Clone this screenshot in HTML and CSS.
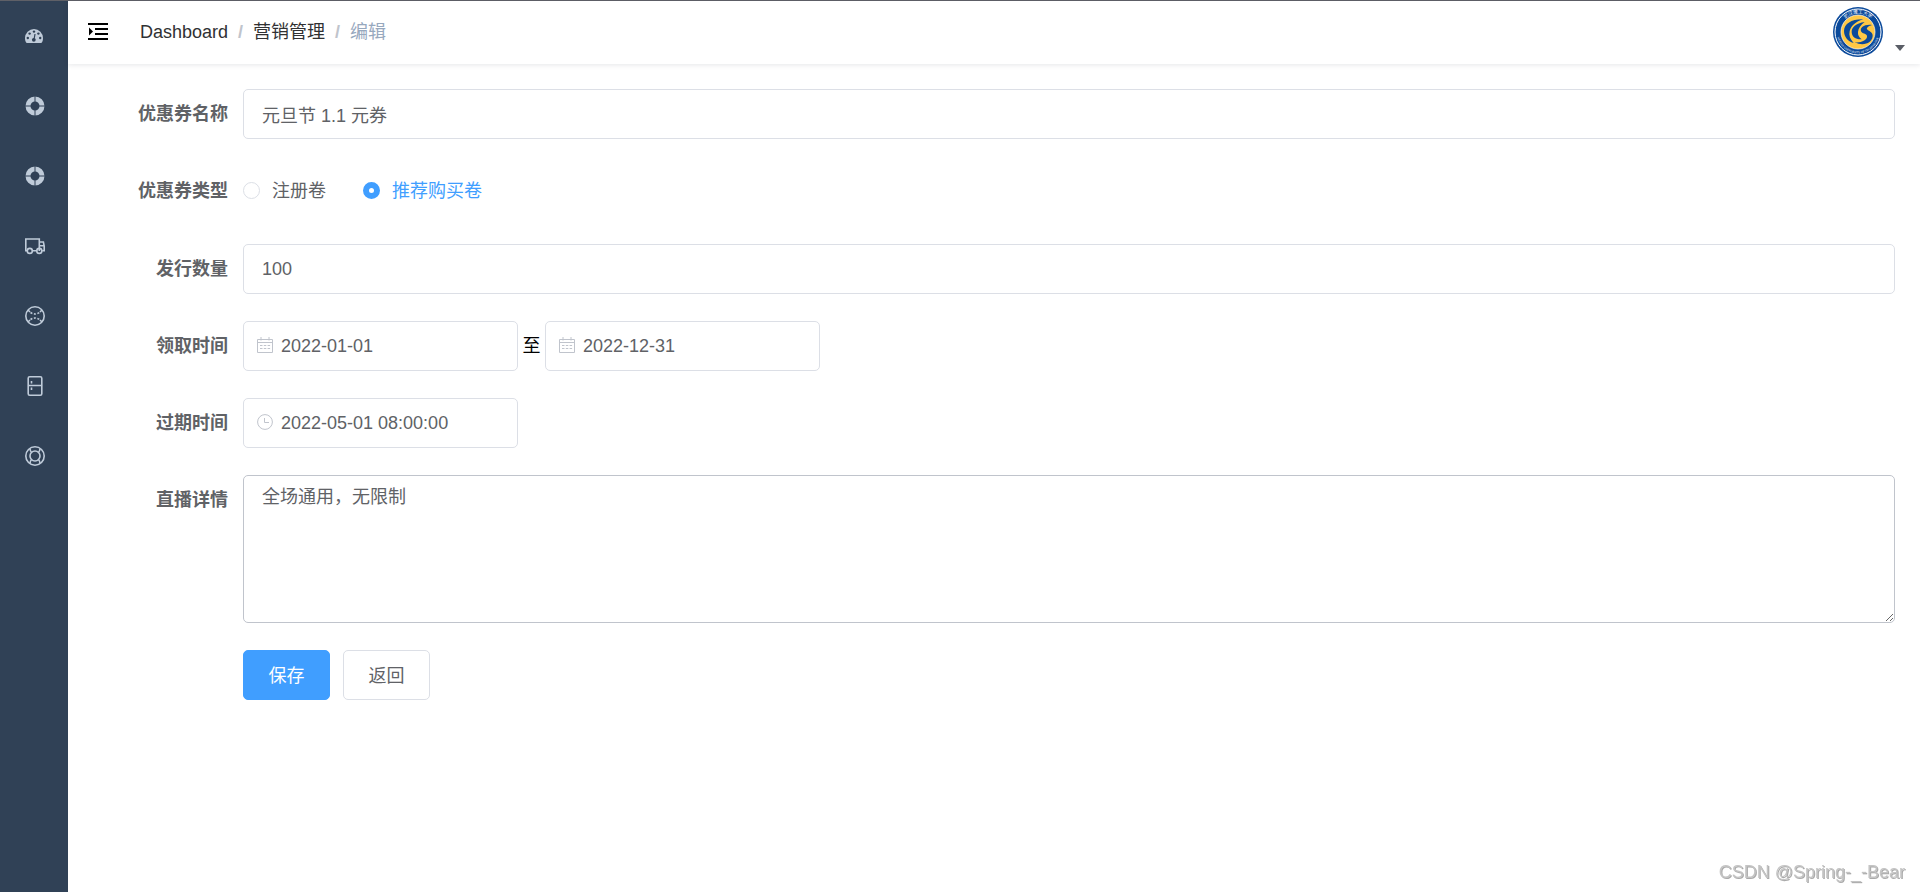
FILE: index.html
```
<!DOCTYPE html>
<html lang="zh-CN">
<head>
<meta charset="utf-8">
<title>营销管理 - 编辑</title>
<link rel="stylesheet" href="styles.css">
</head>
<body>

<div class="app">
  <nav class="sidebar" aria-label="主菜单">
    <a class="menu-item" href="#" title="Dashboard">
      <svg class="menu-icon dash" viewBox="0 0 18 14">
        <path fill="currentColor" d="M9 0a9 9 0 0 0-9 9c0 1.800.4 3.200 1.100 4.500.2.300.4.500.8.500h14.200c.4 0 .6-.2.8-.5C17.600 12.200 18 10.800 18 9a9 9 0 0 0-9-9z"/>
        <g fill="#304156"><circle cx="2.800" cy="9" r="1.200"/><circle cx="4.600" cy="4.600" r="1.200"/><circle cx="9" cy="2.600" r="1.200"/><circle cx="13.400" cy="4.600" r="1.200"/><circle cx="15.200" cy="9" r="1.200"/><circle cx="8.800" cy="10.800" r="1.900"/></g>
        <path stroke="#304156" stroke-width="1.200" d="M9 10.500l1-5.500"/>
      </svg>
    </a>
    <a class="menu-item" href="#" title="营销管理">
      <svg class="menu-icon" viewBox="0 0 20 20">
        <circle cx="10" cy="10" r="7" fill="none" stroke="currentColor" stroke-width="5"/>
        <path stroke="#304156" d="M10 0v20M0 10h20"/>
      </svg>
    </a>
    <a class="menu-item" href="#" title="商品管理">
      <svg class="menu-icon" viewBox="0 0 20 20">
        <circle cx="10" cy="10" r="7" fill="none" stroke="currentColor" stroke-width="5"/>
        <path stroke="#304156" d="M10 0v20M0 10h20"/>
      </svg>
    </a>
    <a class="menu-item" href="#" title="物流管理">
      <svg class="menu-icon line" viewBox="0 0 20 20">
        <path d="M2.500 14.700H.8V3h13.500v12M7 14.700h5M14.200 6h4.200l.8 4v4.700h-2M14.200 9.700h5"/>
        <circle cx="4.800" cy="14.900" r="2.500"/><circle cx="14.300" cy="14.900" r="2.500"/>
      </svg>
    </a>
    <a class="menu-item" href="#" title="活动管理">
      <svg class="menu-icon line" viewBox="0 0 20 20">
        <circle cx="10" cy="10" r="9.200"/>
        <path d="M3 4l2 2M17 4l-2 2M3 16l2-2M17 16l-2-2"/>
        <path stroke-dasharray="2 1.600" d="M5.500 6.500c2.800 2 6.200 2 9 0M5.500 13.500c2.800-2 6.200-2 9 0"/>
      </svg>
    </a>
    <a class="menu-item" href="#" title="库存管理">
      <svg class="menu-icon line" viewBox="0 0 20 20">
        <rect x="3.200" y=".8" width="13.600" height="18.400" rx="1.500"/>
        <path d="M3.200 9.500h13.600M6.500 5v2.500M6.500 11.500v2.500"/>
      </svg>
    </a>
    <a class="menu-item" href="#" title="帮助">
      <svg class="menu-icon line" viewBox="0 0 20 20">
        <circle cx="10" cy="10" r="9.200"/><circle cx="10" cy="10" r="5"/>
        <path d="M5 2.800C5.200 4.600 5.500 5.500 6.600 6.500M15 2.800c-.2 1.800-.5 2.700-1.600 3.700M5 17.200c.2-1.800.5-2.700 1.600-3.700M15 17.200c-.2-1.800-.5-2.700-1.600-3.700"/>
      </svg>
    </a>
  </nav>

  <div class="main">
    <header class="navbar">
      <button class="hamburger" type="button" aria-label="展开菜单">
        <svg viewBox="0 0 20 18"><path d="M0 0h20v2H0zM7 5h13v2H7zM7 10h13v2H7zM0 15h20v2H0zM1 4.500l4 4-4 4z"/></svg>
      </button>
      <div class="breadcrumb">
        <a href="#">Dashboard</a><i>/</i><a href="#">营销管理</a><i>/</i><span>编辑</span>
      </div>
      <button class="user" type="button" aria-label="用户菜单">
        <svg class="avatar" viewBox="0 0 150 150">
          <defs>
            <path id="arc-top" d="M20 75a55 55 0 0 1 110 0"/>
            <path id="arc-bottom" d="M11 75a64 64 0 0 0 128 0"/>
          </defs>
          <circle cx="75" cy="75" r="75" fill="#0b4a9b"/>
          <circle cx="75" cy="75" r="69" fill="none" stroke="#fff" stroke-width="3"/>
          <circle cx="75" cy="75" r="51" fill="#ffc845" stroke="#fff" stroke-width="2"/>
          <g fill="#0b4a9b">
            <path d="M91 37C56 36 34 50 33 71c0 18 11 32 29 37-11-12-15-22-12-35 3-15 15-28 41-36z"/>
            <path d="M95 45C69 49 55 61 56 76c1 14 12 22 30 21-8-6-12-13-11-22 1-11 8-21 20-30z"/>
            <path d="M117 54C94 51 80 62 84 73c3 8 17 6 18 14 2 12-17 21-37 19 26 13 53 2 54-19 1-12-13-15-17-20-2-5 5-10 15-13z"/>
          </g>
          <text class="seal-cn"><textPath href="#arc-top" startOffset="50%">武汉理工大学</textPath></text>
          <text class="seal-en"><textPath href="#arc-bottom" startOffset="50%">WUHAN UNIVERSITY OF TECHNOLOGY</textPath></text>
        </svg>
        <svg class="caret" viewBox="0 0 10 6"><path d="M0 0h10L5 6z"/></svg>
      </button>
    </header>

    <form class="form">
      <div class="form-item">
        <label class="form-label" for="name">优惠券名称</label>
        <input class="input" id="name" type="text" value="元旦节 1.1 元券">
      </div>
      <div class="form-item" role="radiogroup" aria-labelledby="type-label">
        <span class="form-label" id="type-label">优惠券类型</span>
        <div class="radios">
          <label class="radio"><input type="radio" name="type"><span>注册卷</span></label>
          <label class="radio"><input type="radio" name="type" checked><span>推荐购买卷</span></label>
        </div>
      </div>
      <div class="form-item">
        <label class="form-label" for="count">发行数量</label>
        <input class="input" id="count" type="text" value="100">
      </div>
      <div class="form-item">
        <label class="form-label" for="start">领取时间</label>
        <div class="date">
          <svg class="date-icon" viewBox="0 0 16 16"><path d="M.5 2.500h15v13H.5zM.5 5.500h15M4 0v3.500M12 0v3.500M3 8.500h2.500M6.800 8.500h2.500M10.600 8.500h2.500M3 11.500h2.500M6.800 11.500h2.500M10.600 11.500h2.500"/></svg>
          <input class="input" id="start" type="text" value="2022-01-01">
        </div>
        <label class="to" for="end">至</label>
        <div class="date">
          <svg class="date-icon" viewBox="0 0 16 16"><path d="M.5 2.500h15v13H.5zM.5 5.500h15M4 0v3.500M12 0v3.500M3 8.500h2.500M6.800 8.500h2.500M10.600 8.500h2.500M3 11.500h2.500M6.800 11.500h2.500M10.600 11.500h2.500"/></svg>
          <input class="input" id="end" type="text" value="2022-12-31">
        </div>
      </div>
      <div class="form-item">
        <label class="form-label" for="expire">过期时间</label>
        <div class="date">
          <svg class="date-icon" viewBox="0 0 16 16"><circle cx="8" cy="8" r="7.400"/><path d="M7.500 4v4.500H12"/></svg>
          <input class="input" id="expire" type="text" value="2022-05-01 08:00:00">
        </div>
      </div>
      <div class="form-item">
        <label class="form-label" for="detail">直播详情</label>
        <textarea class="input textarea" id="detail">全场通用，无限制</textarea>
      </div>
      <div class="form-actions">
        <button class="btn primary" type="button">保存</button>
        <button class="btn" type="button">返回</button>
      </div>
    </form>
  </div>
</div>

<div class="watermark">CSDN @Spring-_-Bear</div>

</body>
</html>
```
FILE: styles.css
```
* {
  box-sizing: border-box;
}

body {
  margin: 0;
  color: #606266;
  background: #fff;
  font-family: "Liberation Sans", "Noto Sans CJK SC", sans-serif;
  font-size: 18px;
}

input, textarea, button {
  font: inherit;
  color: inherit;
}

.app {
  display: flex;
  min-height: 100vh;
  border-top: 1px solid #5f6067;
}

/* sidebar */
.sidebar {
  width: 68px;
  flex-shrink: 0;
  background: #304156;
}

.menu-item {
  display: flex;
  align-items: center;
  height: 70px;
  padding-left: 25px;
  color: #bfcbd9;
}

.menu-icon {
  width: 20px;
  height: 20px;
}

.menu-icon.dash {
  width: 18px;
  height: 14px;
}

.menu-icon.line {
  fill: none;
  stroke: currentColor;
  stroke-width: 1.6;
}

.main {
  flex: 1;
  min-width: 0;
}

/* navbar */
.navbar {
  display: flex;
  align-items: center;
  height: 63px;
  padding: 0 15px 2px 20px;
  box-shadow: 0 1px 5px rgba(0, 21, 41, .1);
}

.hamburger, .user {
  display: flex;
  padding: 0;
  border: 0;
  background: none;
  cursor: pointer;
}

.hamburger svg {
  width: 20px;
  height: 18px;
}

.breadcrumb {
  margin-left: 32px;
  line-height: 60px;
  color: #97a8be;
}

.breadcrumb a {
  color: #303133;
  text-decoration: none;
}

.breadcrumb i {
  margin: 0 10px;
  font-style: normal;
  font-weight: bold;
  color: #c0c4cc;
}

.user {
  margin-left: auto;
  align-items: flex-end;
  gap: 12px;
}

.avatar {
  width: 50px;
  height: 50px;
}

.seal-cn, .seal-en {
  fill: #fff;
  text-anchor: middle;
  font-family: "Liberation Serif", "Noto Sans CJK SC", serif;
}

.seal-cn {
  font-size: 14px;
}

.seal-en {
  font-size: 9px;
}

.caret {
  width: 10px;
  height: 6px;
  margin-bottom: 6px;
  fill: #5a5e66;
}

/* form */
.form {
  display: flex;
  flex-direction: column;
  gap: 27px;
  padding: 25px 25px 25px 0;
}

.form-item {
  display: flex;
}

.form-label {
  width: 175px;
  flex-shrink: 0;
  padding-right: 15px;
  line-height: 50px;
  text-align: right;
  font-weight: bold;
}

.input {
  display: block;
  width: 100%;
  min-width: 0;
  height: 50px;
  padding: 0 18px;
  border: 1px solid #dcdfe6;
  border-radius: 5px;
  background: #fff;
  outline: none;
}

.input:focus {
  border-color: #409eff;
}

.textarea {
  height: 148px;
  padding: 8px 18px;
  border-color: #c0c4cc;
  line-height: 27px;
  resize: vertical;
}

.radios {
  display: flex;
  gap: 37px;
  height: 51px;
}

.radio {
  display: flex;
  align-items: center;
  gap: 12px;
  height: 49px;
  line-height: 24px;
  cursor: pointer;
}

.radio input {
  appearance: none;
  width: 17px;
  height: 17px;
  margin: 0;
  border: 1px solid #dcdfe6;
  border-radius: 50%;
}

.radio input:checked {
  border: 6px solid #409eff;
}

.radio input:checked + span {
  color: #409eff;
}

.date {
  position: relative;
  width: 275px;
}

.date .input {
  padding-left: 37px;
}

.date-icon {
  position: absolute;
  top: 16px;
  left: 14px;
  width: 16px;
  height: 16px;
  fill: none;
  stroke: #c0c4cc;
}

.to {
  width: 27px;
  line-height: 50px;
  text-align: center;
  color: #000;
}

.form-actions {
  display: flex;
  gap: 13px;
  margin-left: 175px;
}

.btn {
  width: 87px;
  height: 50px;
  padding: 0 0 2px;
  border: 1px solid #dcdfe6;
  border-radius: 5px;
  background: #fff;
  cursor: pointer;
}

.btn.primary {
  border-color: #409eff;
  background: #409eff;
  color: #fff;
}

.watermark {
  position: fixed;
  right: 15px;
  bottom: 9px;
  color: #c4c4c4;
  text-shadow: 1px 1px 0 #aaa, -1px -1px 0 #fff;
}
```
